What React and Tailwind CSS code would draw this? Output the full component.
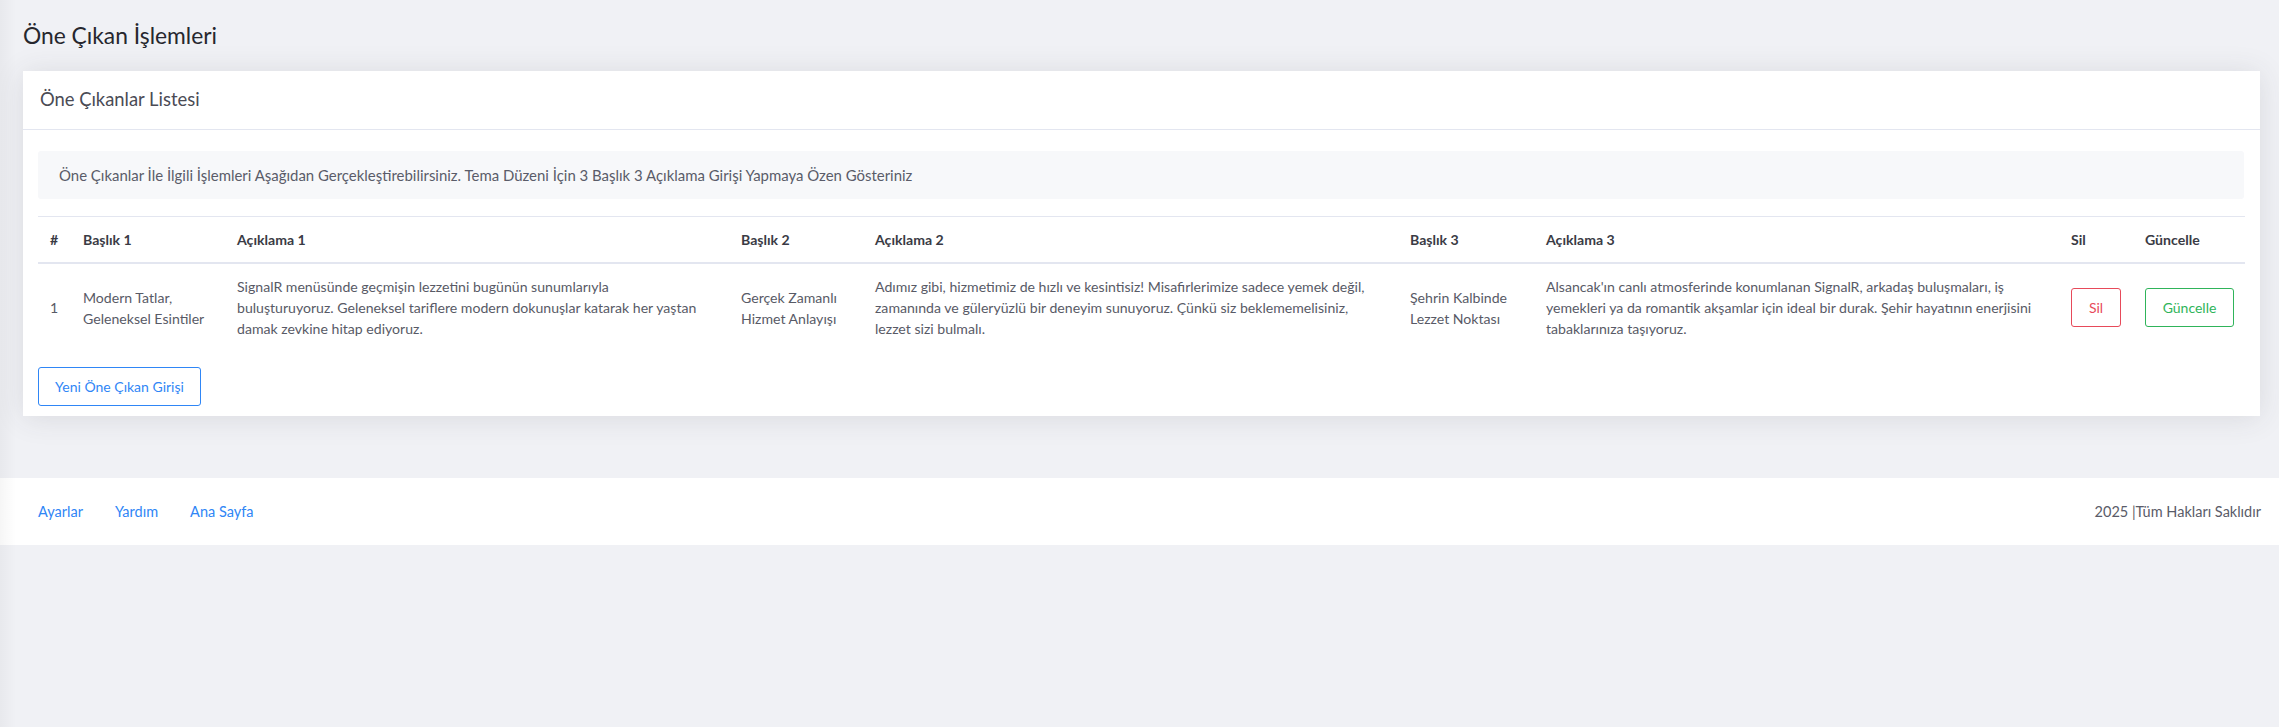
import React from 'react';

const font = { fontFamily: 'Lato, "Noto Sans", sans-serif' };

// table columns, widths taken from the reference
const columns = [
    { label: '#', w: 'w-[33px]' },
    { label: 'Başlık 1', w: 'w-[154px]' },
    { label: 'Açıklama 1', w: 'w-[504px]' },
    { label: 'Başlık 2', w: 'w-[134px]' },
    { label: 'Açıklama 2', w: 'w-[535px]' },
    { label: 'Başlık 3', w: 'w-[136px]' },
    { label: 'Açıklama 3', w: 'w-[525px]' },
    { label: 'Sil', w: 'w-[74px]' },
    { label: 'Güncelle', w: 'w-[112px]' },
];

const Lines = ({ lines }) => (
    <>
        {lines.map((line, i) => (
            <React.Fragment key={i}>
                {line}
                {i < lines.length - 1 && <br />}
            </React.Fragment>
        ))}
    </>
);

const row = {
    title1: ['Modern Tatlar,', 'Geleneksel Esintiler'],
    desc1: [
        'SignalR menüsünde geçmişin lezzetini bugünün sunumlarıyla',
        'buluşturuyoruz. Geleneksel tariflere modern dokunuşlar katarak her yaştan',
        'damak zevkine hitap ediyoruz.',
    ],
    title2: ['Gerçek Zamanlı', 'Hizmet Anlayışı'],
    desc2: [
        'Adımız gibi, hizmetimiz de hızlı ve kesintisiz! Misafirlerimize sadece yemek değil,',
        'zamanında ve güleryüzlü bir deneyim sunuyoruz. Çünkü siz beklememelisiniz,',
        'lezzet sizi bulmalı.',
    ],
    title3: ['Şehrin Kalbinde', 'Lezzet Noktası'],
    desc3: [
        "Alsancak'ın canlı atmosferinde konumlanan SignalR, arkadaş buluşmaları, iş",
        'yemekleri ya da romantik akşamlar için ideal bir durak. Şehir hayatının enerjisini',
        'tabaklarınıza taşıyoruz.',
    ],
};

export default function App() {
    return (
        <div className="relative min-h-screen bg-[#f0f1f5] text-[#5a5c69]" style={font}>
            {/* sidebar shadow on the left edge */}
            <div className="pointer-events-none absolute left-0 top-0 z-10 h-full w-[16px] bg-linear-to-r from-[rgba(0,0,0,0.035)] to-transparent"></div>

            <div className="pl-[23px] pr-[19px] pt-5">
                <h1 className="h-[30px] text-[22.8px] leading-[30px] text-[#26272e]">Öne Çıkan İşlemleri</h1>

                {/* Card */}
                <div className="mt-[21px] bg-white shadow-[0_2px_28px_0_rgba(58,59,69,0.12)]">
                    <div className="flex h-[59px] items-center border-b border-[#e3e6f0] px-[17px]">
                        <h2 className="text-[18.4px] text-[#4a4b55]">Öne Çıkanlar Listesi</h2>
                    </div>

                    <div className="pl-[15px] pr-[16px] pt-[21px] pb-[10px]">
                        <div className="flex h-[48px] items-center rounded-[3px] bg-[#f7f8fa] px-[21px] text-[14.95px] text-[#5a5c69]">
                            Öne Çıkanlar İle İlgili İşlemleri Aşağıdan Gerçekleştirebilirsiniz. Tema Düzeni İçin 3 Başlık 3 Açıklama Girişi Yapmaya Özen Gösteriniz
                        </div>

                        <table className="mt-[17px] w-full table-fixed border-collapse text-[14.1px] leading-[21px]">
                            <colgroup>
                                {columns.map((c) => (
                                    <col key={c.label} className={c.w} />
                                ))}
                            </colgroup>
                            <thead>
                                <tr className="border-t border-[#e3e6f0]">
                                    {columns.map((c) => (
                                        <th
                                            key={c.label}
                                            className="border-b-2 border-[#e3e6f0] px-[12px] py-[12px] text-left align-bottom font-bold text-[#3a3b45]"
                                        >
                                            {c.label}
                                        </th>
                                    ))}
                                </tr>
                            </thead>
                            <tbody>
                                <tr className="text-[#585a66]">
                                    <td className="px-[12px] py-[12px] align-middle">1</td>
                                    <td className="px-[12px] py-[12px] align-middle"><Lines lines={row.title1} /></td>
                                    <td className="px-[12px] py-[12px] align-middle whitespace-nowrap"><Lines lines={row.desc1} /></td>
                                    <td className="px-[12px] py-[12px] align-middle"><Lines lines={row.title2} /></td>
                                    <td className="px-[12px] py-[12px] align-middle whitespace-nowrap"><Lines lines={row.desc2} /></td>
                                    <td className="px-[12px] py-[12px] align-middle"><Lines lines={row.title3} /></td>
                                    <td className="px-[12px] py-[12px] align-middle whitespace-nowrap"><Lines lines={row.desc3} /></td>
                                    <td className="px-[12px] py-[12px] align-middle">
                                        <button className="h-[39px] w-[50px] rounded-[3px] border border-[#e74a5a] text-[14px] text-[#e74a5a]">
                                            Sil
                                        </button>
                                    </td>
                                    <td className="px-[12px] py-[12px] align-middle">
                                        <button className="h-[39px] w-[89px] rounded-[3px] border border-[#2fb45a] text-[14px] text-[#2fb45a]">
                                            Güncelle
                                        </button>
                                    </td>
                                </tr>
                            </tbody>
                        </table>

                        <button className="mt-[16px] h-[39px] w-[163px] rounded-[3px] border border-[#2f86f6] text-[14px] text-[#2f86f6]">
                            Yeni Öne Çıkan Girişi
                        </button>
                    </div>
                </div>
            </div>

            {/* Footer */}
            <footer className="mt-[62px] flex h-[67px] items-center justify-between bg-white pl-[38px] pr-[18px] text-[14.5px]">
                <nav className="flex gap-[32px] text-[#2f86f6]">
                    <a href="#">Ayarlar</a>
                    <a href="#">Yardım</a>
                    <a href="#">Ana Sayfa</a>
                </nav>
                <span className="text-[#5a5c69]">2025 |Tüm Hakları Saklıdır</span>
            </footer>
        </div>
    );
}
